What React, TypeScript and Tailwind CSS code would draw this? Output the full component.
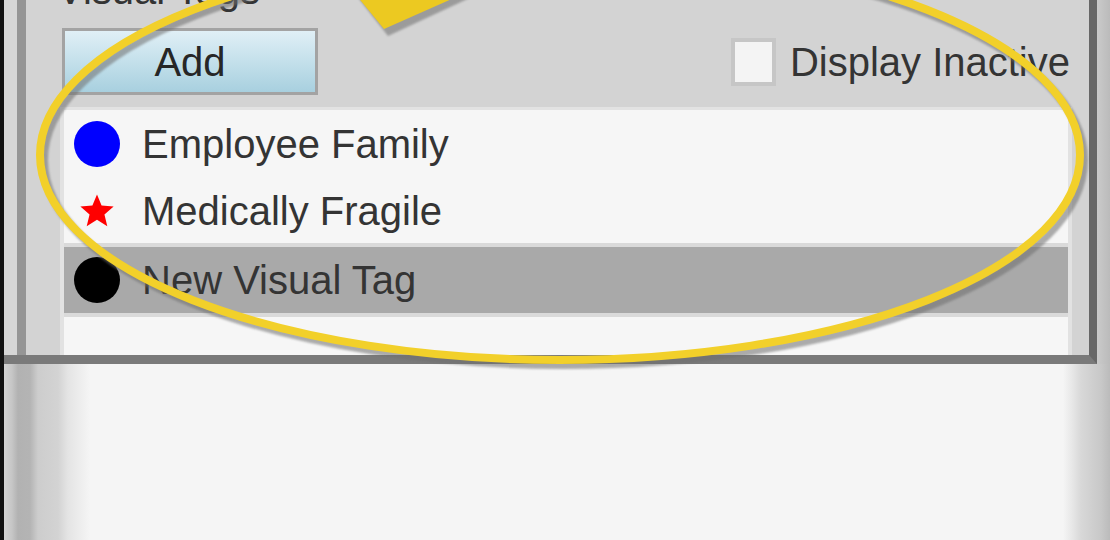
import React from "react";

type Tag = {
  name: string;
  icon: "dot-blue" | "star" | "dot-black";
  selected?: boolean;
};

const TAGS: Tag[] = [
  { name: "Employee Family", icon: "dot-blue" },
  { name: "Medically Fragile", icon: "star" },
  { name: "New Visual Tag", icon: "dot-black", selected: true },
];

function TagIcon({ icon }: { icon: Tag["icon"] }) {
  if (icon === "star") {
    return (
      <svg width="38" height="38" viewBox="0 0 24 24">
        <polygon
          points="12,1.5 14.9,8.6 22.5,9.2 16.7,14.2 18.5,21.7 12,17.6 5.5,21.7 7.3,14.2 1.5,9.2 9.1,8.6"
          fill="#ff0000"
        />
      </svg>
    );
  }
  return (
    <div
      className={
        icon === "dot-blue"
          ? "h-[46px] w-[46px] rounded-full bg-[#0000ff]"
          : "h-[46px] w-[46px] rounded-full bg-black"
      }
    />
  );
}

function TagRow({ tag, height }: { tag: Tag; height: string }) {
  return (
    <div
      className={
        tag.selected
          ? "flex items-center border-y-[4px] border-[#dadada] bg-[#a9a9a9] pl-[9px] " + height
          : "flex items-center pl-[9px] " + height
      }
    >
      <div className="flex w-[47px] justify-center">
        <TagIcon icon={tag.icon} />
      </div>
      <span className="ml-[22px] text-[40px] leading-none text-[#343434]">
        {tag.name}
      </span>
    </div>
  );
}

function Callout() {
  return (
    <svg
      className="pointer-events-none absolute left-0 top-0"
      width="1110"
      height="540"
      viewBox="0 0 1110 540"
    >
      <defs>
        <filter id="soft" x="-10%" y="-10%" width="120%" height="120%">
          <feGaussianBlur stdDeviation="1.2" />
        </filter>
      </defs>

      {/* shadow */}
      <g transform="translate(4 5)" filter="url(#soft)" opacity="0.55">
        <ellipse cx="560" cy="155" rx="520" ry="205" fill="none" stroke="#6e6e6e" strokeWidth="8" />
        <polygon points="352,-10 472,-10 384,31" fill="#6e6e6e" />
      </g>

      {/* yellow outline */}
      <ellipse cx="560" cy="155" rx="520" ry="205" fill="none" stroke="#f2d02a" strokeWidth="8" />
      <polygon points="352,-10 472,-10 384,29" fill="#ecc921" />
    </svg>
  );
}

export default function App() {
  return (
    <div className="relative flex h-[540px] w-[1110px] overflow-hidden bg-[#f5f5f5] font-['Liberation_Sans',Arial,sans-serif]">
      {/* left window edge */}
      <div className="h-full w-[4px] bg-[#111]" />

      <div className="flex flex-1 flex-col">
        {/* ===== group box ===== */}
        <div className="flex h-[364px]">
          <div className="flex w-[1093px] border-b-[9px] border-r-[8px] border-b-[#7a7a7a] border-r-[#676767] bg-[#d3d3d3]">
            <div className="w-[13px] bg-[#d6d6d6]" />
            <div className="w-[9px] bg-[#959595]" />
            <div className="w-[34px]" />

            {/* content */}
            <div className="flex w-[1012px] flex-col">
              <div className="h-[28px]">
                <p className="-ml-[3px] -mt-[30px] text-[40px] leading-[40px] text-[#343434]">
                  Visual Tags
                </p>
              </div>

              <div className="flex h-[67px] items-center justify-between pl-[2px] pr-[2px]">
                <button className="flex h-[67px] w-[256px] items-center justify-center border-[3px] border-[#a3a3a3] bg-gradient-to-b from-[#e0eff6] via-[#c4e0eb] to-[#a8d0df] text-[40px] leading-none text-[#262626]">
                  Add
                </button>

                <label className="flex items-center gap-[14px]">
                  <span className="h-[48px] w-[45px] border-[4px] border-[#c6c6c6] bg-[#f4f4f4]" />
                  <span className="text-[40px] leading-none text-[#343434]">
                    Display Inactive
                  </span>
                </label>
              </div>

              <div className="mt-[12px] flex-1 border-x-[4px] border-t-[3px] border-[#e2e2e2] bg-[#f6f6f6]">
                <TagRow tag={TAGS[0]} height="h-[68px]" />
                <TagRow tag={TAGS[1]} height="h-[65px]" />
                <TagRow tag={TAGS[2]} height="h-[74px]" />
              </div>
            </div>

            <div className="w-[17px]" />
          </div>

          <div className="w-[13px] bg-gradient-to-r from-[#cacaca] to-[#bbbbbb]" />
        </div>

        {/* ===== lower area ===== */}
        <div className="flex flex-1">
          <div className="w-[86px] bg-[linear-gradient(to_right,#d4d4d4_0px,#c6c6c6_8px,#b2b2b2_14px,#b4b4b4_26px,#cdcdcd_34px,#d3d3d3_54px,#e4e4e4_64px,#f5f5f5_86px)]" />
          <div className="flex-1" />
          <div className="w-[47px] bg-[linear-gradient(to_right,#f5f5f5_0px,#e9e9e9_8px,#d8d8d8_18px,#d0d0d0_28px,#c8c8c8_38px,#bbbbbb_47px)]" />
        </div>
      </div>

      <Callout />
    </div>
  );
}
